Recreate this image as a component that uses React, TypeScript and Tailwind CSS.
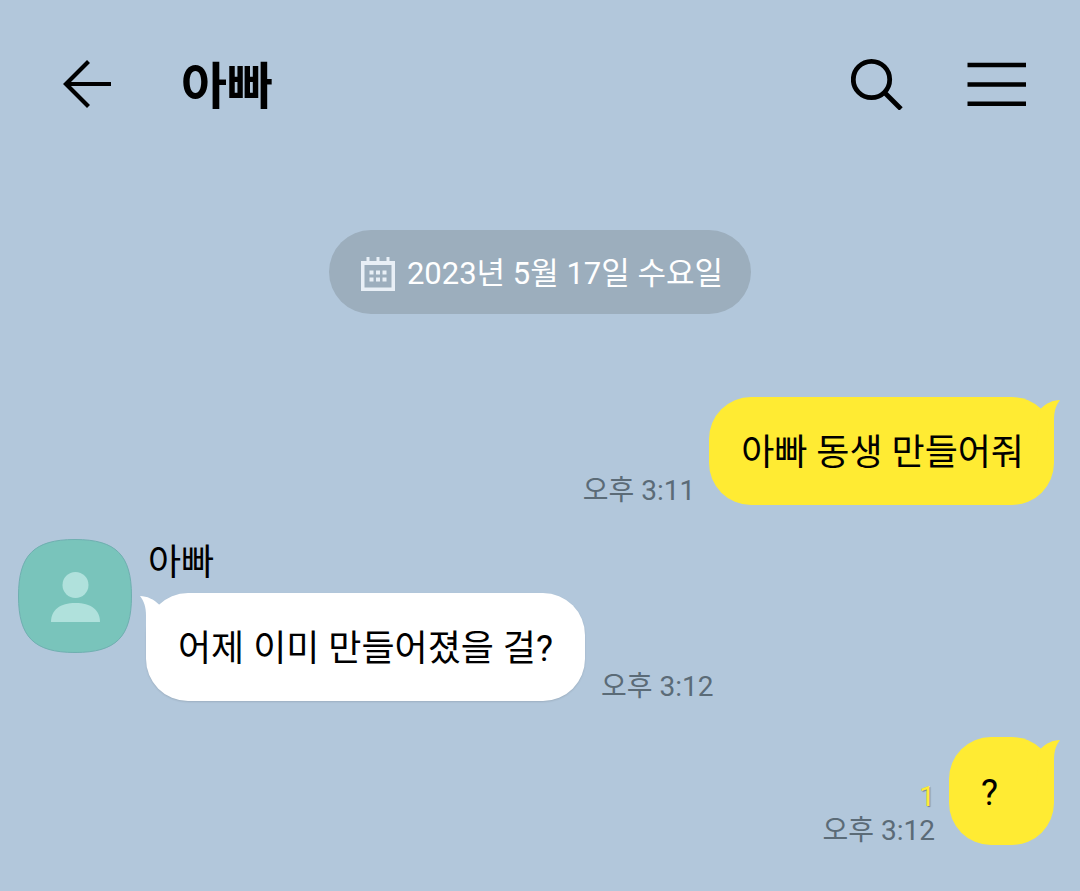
import type { ReactNode } from 'react';

interface Message {
  id: number;
  mine: boolean;
  text: string;
  time: string;
  unread?: number;
}

const CONTACT = '아빠';

const MESSAGES: Message[] = [
  { id: 1, mine: true, text: '아빠 동생 만들어줘', time: '오후 3:11' },
  { id: 2, mine: false, text: '어제 이미 만들어졌을 걸?', time: '오후 3:12' },
  { id: 3, mine: true, text: '?', time: '오후 3:12', unread: 1 },
];

function BackIcon() {
  return (
    <svg width="48" height="52" viewBox="0 0 48 52" fill="none" stroke="currentColor" strokeWidth="4.2">
      <path d="M25.5 3.5 3 26l22.5 22.5M3 26h45" />
    </svg>
  );
}

function SearchIcon() {
  return (
    <svg width="52" height="52" viewBox="0 0 52 52" fill="none" stroke="currentColor">
      <circle cx="20.5" cy="21.5" r="18.2" strokeWidth="4.8" />
      <path d="M33 34 50 51" strokeWidth="4.8" />
    </svg>
  );
}

function MenuIcon() {
  return (
    <svg width="59" height="44" viewBox="0 0 59 44" fill="none" stroke="currentColor" strokeWidth="4.4">
      <path d="M.5 3h58.500M.5 22.500h58.500M.5 41.800h58.500" />
    </svg>
  );
}

function CalendarIcon() {
  return (
    <svg width="34" height="34" viewBox="0 0 34 34" fill="#e8eff6" aria-hidden="true">
      <path fillRule="evenodd" d="M0 4h34v30H0V4Zm3.5 4v22.5h27V8h-27Z" />
      <path d="M5.5 0h3v5h-3zM15.5 0h3v5h-3zM25.5 0h3v5h-3z" />
      <path d="M8.5 13.5h4v4h-4zM15 13.5h4v4h-4zM21.5 13.5h4v4h-4zM8.5 20.5h4v4h-4zM15 20.5h4v4h-4zM21.5 20.5h4v4h-4z" />
    </svg>
  );
}

function Avatar() {
  return (
    <svg className="shrink-0" width="114" height="114" viewBox="0 0 114 114" role="img" aria-label={CONTACT}>
      <path
        d="M57 .5C98 .5 113.500 16 113.500 57S98 113.500 57 113.500.5 98 .5 57 16 .5 57 .5Z"
        fill="#79c4bb"
        stroke="#6fafb0"
      />
      <circle cx="57.500" cy="46" r="13" fill="#b0e1dc" />
      <path d="M33 83c0-12 9-19 24.500-19S82 71 82 83H33Z" fill="#b0e1dc" />
    </svg>
  );
}

function Bubble({ mine, children }: { mine: boolean; children: ReactNode }) {
  return (
    <div
      className={`relative min-w-[105px] rounded-[42px] pt-[30px] pb-[26px] pl-8 text-4xl leading-[52px] ${
        mine ? 'bg-[#ffeb33] pr-[30px]' : 'bg-white pr-8 shadow-[0_1px_2px_rgba(0,0,0,0.12)]'
      }`}
    >
      <svg
        className={`absolute top-0 ${mine ? '-right-1.5 text-[#ffeb33]' : '-left-1.5 -scale-x-100 text-white'}`}
        width="24"
        height="46"
        viewBox="0 0 24 46"
        fill="currentColor"
        aria-hidden="true"
      >
        <path d="M5 11.500C10 6.500 17 3 24 3c-4 5-6 11-6 20v23H0Z" />
      </svg>
      <p className="relative">{children}</p>
    </div>
  );
}

function Meta({ message }: { message: Message }) {
  return (
    <div className={`flex flex-col gap-1.5 text-[28px] leading-7 ${message.mine ? 'items-end' : 'items-start'}`}>
      {message.unread && (
        <span className="text-[#ffeb33] [text-shadow:1px_1px_1px_rgba(0,0,0,0.35)]">{message.unread}</span>
      )}
      <time className="text-[#5b6b77]">{message.time}</time>
    </div>
  );
}

function MessageRow({ message }: { message: Message }) {
  if (message.mine) {
    return (
      <li className="flex items-end justify-end gap-3.5 pr-[26px]">
        <Meta message={message} />
        <Bubble mine>{message.text}</Bubble>
      </li>
    );
  }

  return (
    <li className="flex items-start gap-3.5 pb-0.5 pl-[18px]">
      <Avatar />
      <div>
        <p className="pt-0.5 pb-2 pl-0.5 text-4xl leading-[44px]">{CONTACT}</p>
        <div className="flex items-end gap-4">
          <Bubble mine={false}>{message.text}</Bubble>
          <Meta message={message} />
        </div>
      </div>
    </li>
  );
}

export default function App() {
  return (
    <div className="min-h-screen bg-[#b2c7db] font-[Roboto,'Noto_Sans_CJK_KR',sans-serif] text-black">
      <header className="flex h-[168px] items-center pr-[54px] pl-[63px]">
        <button type="button" aria-label="뒤로">
          <BackIcon />
        </button>
        <h1 className="ml-[70px] flex-1 pt-1.5 text-[50px] leading-[60px] font-bold">{CONTACT}</h1>
        <div className="flex items-center gap-16">
          <button type="button" aria-label="검색">
            <SearchIcon />
          </button>
          <button type="button" aria-label="메뉴">
            <MenuIcon />
          </button>
        </div>
      </header>

      <main className="pt-[62px] pb-11">
        {/* Date divider */}
        <div className="flex justify-center">
          <div className="flex items-center gap-3 rounded-full bg-[#9caebd] pt-[22px] pr-7 pb-[18px] pl-8 text-[31px] leading-[44px] text-white">
            <CalendarIcon />
            <time dateTime="2023-05-17">2023년 5월 17일 수요일</time>
          </div>
        </div>

        <ul className="flex flex-col gap-[34px] pt-[83px]">
          {MESSAGES.map((message) => (
            <MessageRow key={message.id} message={message} />
          ))}
        </ul>
      </main>
    </div>
  );
}
